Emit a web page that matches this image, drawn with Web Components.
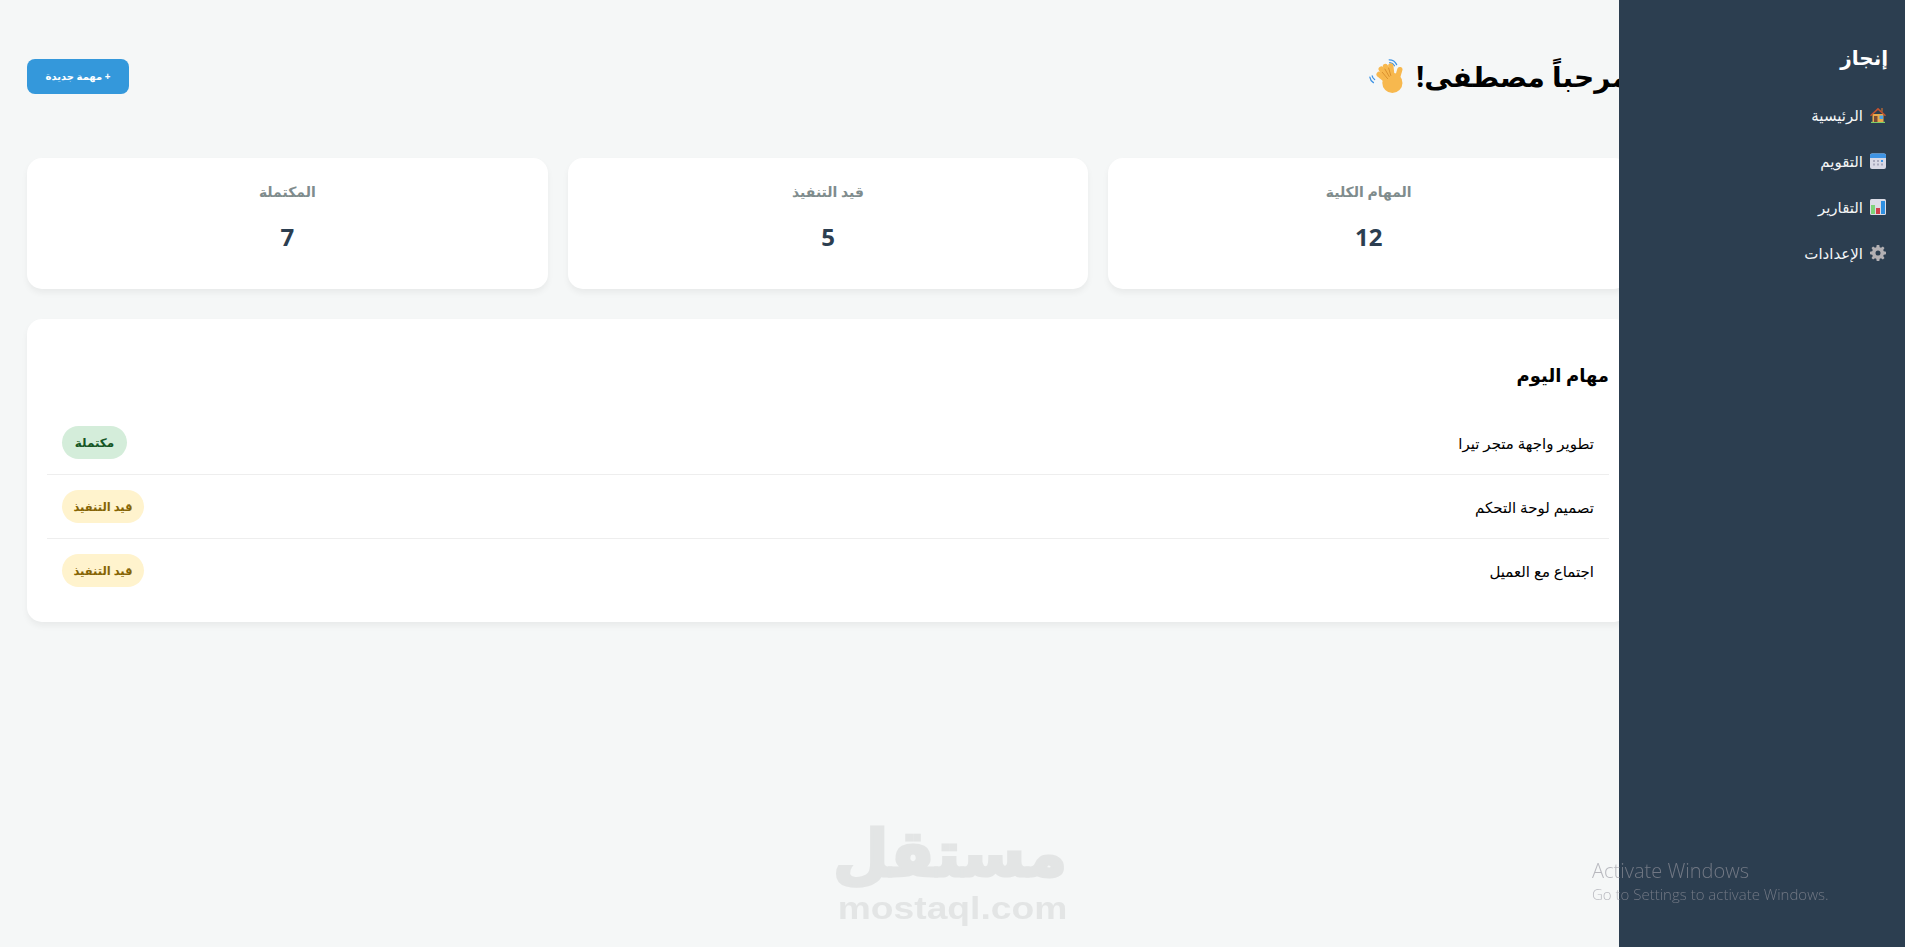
<!DOCTYPE html>
<html lang="ar" dir="rtl">
<head>
<meta charset="utf-8">
<title>إنجاز</title>
<style>
  html, body { margin: 0; height: 100%; overflow: hidden; }
  body { background: #f5f7f7; color: #000; font-family: "Noto Sans", "DejaVu Sans", sans-serif; }
</style>
</head>
<body>
<template id="icon-home">
  <svg viewBox="0 0 16 16" width="16" height="16"><path d="M1 14.800h14V16H1z" fill="#7ccf6a"/><path d="M2.500 7h11v8h-11z" fill="#eaa94a"/><path d="M8 .8L0 8.200l1 1L8 3l7 6.200 1-1z" fill="#c4522e"/><path d="M11 1h2v4.500l-2-2z" fill="#8c5a3c"/><path d="M4 9h3.500v6H4z" fill="#7a4a34"/><path d="M9.500 8.500h3.500V12H9.500z" fill="#4aa3e8"/></svg>
</template>
<template id="icon-calendar">
  <svg viewBox="0 0 16 16" width="16" height="16"><rect y="0.500" width="16" height="15.500" rx="2" fill="#d9d9e6"/><path d="M0 5V2.500a2 2 0 0 1 2-2h12a2 2 0 0 1 2 2V5z" fill="#3f94e4"/><path d="M3 7h2v2H3zM7 7h2v2H7zM3 10.500h2v2H3zM7 10.500h2v2H7zM11 10.500h2v2h-2z" fill="#a9a9bd"/><path d="M11 7h2v2h-2z" fill="#3f94e4"/></svg>
</template>
<template id="icon-chart">
  <svg viewBox="0 0 16 16" width="16" height="16"><rect width="16" height="16" rx="1.500" fill="#dcdce6"/><path d="M1 6h4v9H1z" fill="#7fd27a"/><path d="M6 9h4v6H6z" fill="#d13f4b"/><path d="M11 2h4v13h-4z" fill="#2f8fe0"/></svg>
</template>
<template id="icon-gear">
  <svg viewBox="0 0 16 16" width="16" height="16"><path fill-rule="evenodd" fill="#b3b0b3" d="M6.700 0h2.600l.4 2.200 1.300.6L12.900 1.500l1.600 1.600-1.300 1.900.6 1.300 2.200.4v2.600l-2.200.4-.6 1.300 1.300 1.900-1.600 1.600-1.900-1.300-1.300.6-.4 2.200H6.700l-.4-2.200-1.300-.6-1.900 1.300-1.600-1.600 1.300-1.900-.6-1.300L0 9.300V6.700l2.200-.4.6-1.300L1.500 3.100l1.600-1.600L5 2.800l1.300-.6zM8 5.500a2.500 2.500 0 1 0 0 5 2.500 2.500 0 0 0 0-5z"/></svg>
</template>
<template id="icon-wave">
  <svg viewBox="0 0 32 32" width="34" height="34">
    <g fill="none" stroke="#3f94e4" stroke-width="1.200" stroke-linecap="round">
      <path d="M.8 17c.3 2.200 1.500 4 3.400 5.200"/><path d="M3 15.800c.3 1.500 1.100 2.700 2.300 3.600"/>
      <path d="M19 .8c3 0 5.800 1.800 7 4.500"/><path d="M19.500 3.500c2 .2 3.600 1.200 4.500 2.900"/>
    </g>
    <g fill="none" stroke="#f7b84e" stroke-width="5" stroke-linecap="round">
      <path d="M20 23L9.500 14.500"/><path d="M20 21L11.500 9.500"/><path d="M21 20L15.500 7"/><path d="M22 20L20.500 6.500"/><path d="M25.500 22L29 10"/>
    </g>
    <ellipse cx="22" cy="22.500" rx="9.500" ry="9.500" fill="#f7b84e"/>
    <g fill="none" stroke="#d88f2c" stroke-width=".9" stroke-linecap="round">
      <path d="M12.500 12.500l5 6"/><path d="M15 9.500l4 7"/><path d="M18.500 8.500l2 7"/>
    </g>
  </svg>
</template>

<template id="nav-item-tpl">
  <style>
    :host { display: block; height: 46px; }
    .row { display: flex; align-items: center; gap: 7px; height: 46px; color: #f4f6f7; font-size: 15px; }
    .ico { display: flex; width: 16px; height: 16px; }
  </style>
  <div class="row"><span class="ico"></span><slot></slot></div>
</template>

<template id="app-sidebar-tpl">
  <style>
    :host { display: block; position: fixed; top: 0; right: 0; bottom: 0; width: 286px; box-sizing: border-box; padding: 36px 19px 0 0; background: #2c3e50; z-index: 2; }
    h2 { margin: 0 -2px 12px 0; color: #fff; font-size: 20px; font-weight: 700; line-height: 44px; }
    nav { display: block; }
  </style>
  <h2>إنجاز</h2>
  <nav><slot></slot></nav>
</template>

<template id="page-header-tpl">
  <style>
    :host { display: flex; justify-content: space-between; align-items: center; height: 158px; box-sizing: border-box; padding-bottom: 6px; }
    h1 { margin: 0; display: flex; align-items: center; gap: 13px; font-size: 28px; font-weight: 700; }
    button { width: 102px; height: 35px; margin: 0; padding: 0; border: 0; border-radius: 8px; background: #3498db; color: #fff; font: 700 10px "Noto Sans", "DejaVu Sans", sans-serif; }
    .ico { display: flex; width: 34px; height: 34px; }
  </style>
  <h1><slot></slot><span class="ico"></span></h1>
  <button>+ مهمة جديدة</button>
</template>

<template id="stat-card-tpl">
  <style>
    :host { display: block; flex: 1 1 0; height: 131px; box-sizing: border-box; padding: 22px 20px 0; background: #fff; border-radius: 15px; box-shadow: 0 4px 6px rgba(0,0,0,.05); text-align: center; }
    .label { color: #7f8c8d; font-size: 14px; font-weight: 600; line-height: 24px; }
    .value { margin-top: 21px; color: #2c3e50; font-size: 24px; font-weight: 700; line-height: 24px; }
  </style>
  <div class="label"><slot></slot></div>
  <div class="value"></div>
</template>

<template id="stat-row-tpl">
  <style>
    :host { display: flex; gap: 20px; margin-bottom: 30px; }
  </style>
  <slot></slot>
</template>

<template id="task-panel-tpl">
  <style>
    :host { display: block; box-sizing: border-box; padding: 20px; background: #fff; border-radius: 15px; box-shadow: 0 4px 6px rgba(0,0,0,.05); }
    h3 { margin: 0; height: 72px; box-sizing: border-box; padding-top: 20px; font-size: 18px; font-weight: 700; line-height: 32px; }
  </style>
  <h3></h3>
  <slot></slot>
</template>

<template id="task-row-tpl">
  <style>
    :host { display: flex; justify-content: space-between; align-items: center; height: 64px; box-sizing: border-box; padding: 0 15px; border-bottom: 1px solid #eee; font-size: 15px; }
    :host(:last-child) { border-bottom: 0; height: 63px; }
  </style>
  <span><slot></slot></span>
  <slot name="status"></slot>
</template>

<template id="status-badge-tpl">
  <style>
    :host { display: block; height: 33px; box-sizing: border-box; border-radius: 17px; font-size: 12px; font-weight: 600; line-height: 33px; text-align: center; }
    :host([kind="done"]) { width: 65px; background: #d4edda; color: #155724; }
    :host([kind="doing"]) { width: 82px; background: #fff3cd; color: #856404; font-size: 11.500px; }
  </style>
  <slot></slot>
</template>

<template id="dash-main-tpl">
  <style>
    :host { display: block; width: 1656px; height: 100%; box-sizing: border-box; margin-right: 249px; padding: 0 27px; }
  </style>
  <slot></slot>
</template>

<template id="site-watermark-tpl">
  <style>
    :host { display: block; position: fixed; left: 838px; top: 817px; width: 229px; text-align: center; color: #e3e5e5; z-index: 1; }
    .logo { font: 700 64px/75px "DejaVu Sans", sans-serif; -webkit-text-stroke: 3px #e3e5e5; white-space: nowrap; }
    .url { direction: ltr; font: 700 31px/34px "Liberation Sans", sans-serif; white-space: nowrap; transform: scaleX(1.200); transform-origin: center; }
  </style>
  <div class="logo">مستقل</div>
  <div class="url">mostaql.com</div>
</template>

<template id="activate-note-tpl">
  <style>
    :host { display: block; position: fixed; left: 1592px; top: 857px; direction: ltr; text-align: left; font-family: "Open Sans", sans-serif; font-weight: 300; color: rgba(150,150,160,.65); z-index: 3; white-space: nowrap; }
    .a { font-size: 20px; line-height: 27px; }
    .b { font-size: 15px; line-height: 20px; }
  </style>
  <div class="a">Activate Windows</div>
  <div class="b">Go to Settings to activate Windows.</div>
</template>

<app-sidebar>
  <nav-item icon="icon-home">الرئيسية</nav-item>
  <nav-item icon="icon-calendar">التقويم</nav-item>
  <nav-item icon="icon-chart">التقارير</nav-item>
  <nav-item icon="icon-gear">الإعدادات</nav-item>
</app-sidebar>

<dash-main>
  <page-header>مرحباً مصطفى!</page-header>
  <stat-row>
    <stat-card value="12">المهام الكلية</stat-card>
    <stat-card value="5">قيد التنفيذ</stat-card>
    <stat-card value="7">المكتملة</stat-card>
  </stat-row>
  <task-panel heading="مهام اليوم">
    <task-row>تطوير واجهة متجر تيرا<status-badge slot="status" kind="done">مكتملة</status-badge></task-row>
    <task-row>تصميم لوحة التحكم<status-badge slot="status" kind="doing">قيد التنفيذ</status-badge></task-row>
    <task-row>اجتماع مع العميل<status-badge slot="status" kind="doing">قيد التنفيذ</status-badge></task-row>
  </task-panel>
</dash-main>

<site-watermark></site-watermark>
<activate-note></activate-note>

<script>
// every element just clones its template into an open shadow root
class Base extends HTMLElement {
    constructor() {
        super();
        this.attachShadow({ mode: 'open' });
        const tpl = document.getElementById(this.localName + '-tpl');
        this.shadowRoot.appendChild(tpl.content.cloneNode(true));
    }
    putIcon(id) {
        this.shadowRoot.querySelector('.ico').appendChild(document.getElementById(id).content.cloneNode(true));
    }
}

class NavItem extends Base {
    connectedCallback() { this.putIcon(this.getAttribute('icon')); }
}
class PageHeader extends Base {
    connectedCallback() { this.putIcon('icon-wave'); }
}
class StatCard extends Base {
    connectedCallback() { this.shadowRoot.querySelector('.value').textContent = this.getAttribute('value'); }
}
class TaskPanel extends Base {
    connectedCallback() { this.shadowRoot.querySelector('h3').textContent = this.getAttribute('heading'); }
}

customElements.define('nav-item', NavItem);
customElements.define('page-header', PageHeader);
customElements.define('stat-card', StatCard);
customElements.define('task-panel', TaskPanel);
['app-sidebar', 'dash-main', 'stat-row', 'task-row', 'status-badge', 'site-watermark', 'activate-note'].forEach(name => {
    customElements.define(name, class extends Base {});
});
</script>
</body>
</html>
